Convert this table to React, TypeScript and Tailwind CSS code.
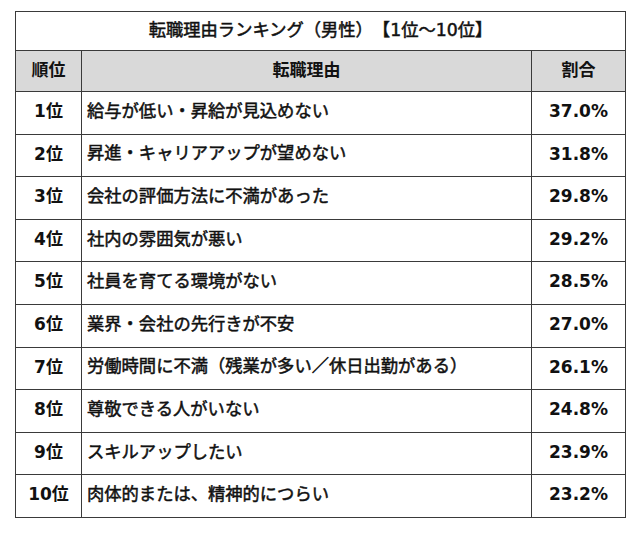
import React from 'react';

type Row = { rank: string; reason: string; rate: string };

const rows: Row[] = [
  { rank: '1位', reason: '給与が低い・昇給が見込めない', rate: '37.0%' },
  { rank: '2位', reason: '昇進・キャリアアップが望めない', rate: '31.8%' },
  { rank: '3位', reason: '会社の評価方法に不満があった', rate: '29.8%' },
  { rank: '4位', reason: '社内の雰囲気が悪い', rate: '29.2%' },
  { rank: '5位', reason: '社員を育てる環境がない', rate: '28.5%' },
  { rank: '6位', reason: '業界・会社の先行きが不安', rate: '27.0%' },
  { rank: '7位', reason: '労働時間に不満（残業が多い／休日出勤がある）', rate: '26.1%' },
  { rank: '8位', reason: '尊敬できる人がいない', rate: '24.8%' },
  { rank: '9位', reason: 'スキルアップしたい', rate: '23.9%' },
  { rank: '10位', reason: '肉体的または、精神的につらい', rate: '23.2%' },
];

const font = "font-['DejaVu_Sans','Noto_Sans_CJK_JP',sans-serif]";
const cell = 'border border-[#3a3a3a]';

const App: React.FC = () => {
  return (
    <div
      className={`w-[640px] h-[533px] bg-white pt-[11px] pl-[15px] ${font} text-[#111] [text-spacing-trim:space-all]`}
    >
      <table className="w-[611px] border-collapse table-fixed text-[17px]">
        <colgroup>
          <col className="w-[66px]" />
          <col />
          <col className="w-[94px]" />
        </colgroup>
        <thead>
          <tr className="h-[39px]">
            <th colSpan={3} className={`${cell} font-normal text-[17.3px] text-center [-webkit-text-stroke:0.5px]`}>
              転職理由ランキング（男性）【1位～10位】
            </th>
          </tr>
          <tr className="h-[41px] bg-[#d9d9d9]">
            <th className={`${cell} font-bold text-center`}>順位</th>
            <th className={`${cell} font-bold text-center`}>転職理由</th>
            <th className={`${cell} font-bold text-center`}>割合</th>
          </tr>
        </thead>
        <tbody>
          {rows.map((r) => (
            <tr key={r.rank} className="h-[42.6px]">
              <td className={`${cell} font-bold text-center pb-[2px]`}>{r.rank}</td>
              <td
                className={`${cell} font-normal text-[17.3px] pl-[5px] pb-[2px] whitespace-nowrap [-webkit-text-stroke:0.5px]`}
              >
                {r.reason}
              </td>
              <td className={`${cell} font-bold text-center pb-[2px]`}>{r.rate}</td>
            </tr>
          ))}
        </tbody>
      </table>
    </div>
  );
};

export default App;
